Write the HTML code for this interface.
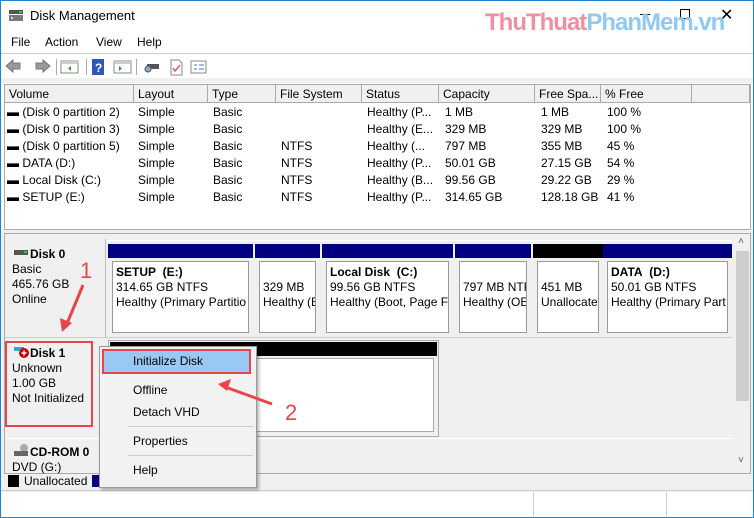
<!DOCTYPE html><html><head><style>
*{margin:0;padding:0;box-sizing:border-box}
body{width:754px;height:518px;overflow:hidden;background:#fff;font-family:"Liberation Sans",sans-serif;font-size:12px;color:#000;position:relative}
.a{position:absolute}
.t{position:absolute;white-space:nowrap}
.hd{position:absolute;top:85px;height:18px;background:#f0f0f0;border-right:1px solid #aaa;border-bottom:1px solid #aaa;padding:2px 0 0 4px}
.part{position:absolute;top:244px;height:93px;background:#f0f0f0}
.part .bar{height:14px;background:#000080}
.part .in{position:absolute;left:4px;right:4px;top:17px;bottom:4px;background:#fff;border:1px solid #999;padding:3px 0 0 3px;line-height:15px;overflow:hidden;white-space:nowrap}
.mi{position:absolute;left:133px}
</style></head><body>
<div class="a" style="left:0;top:0;width:754px;height:518px;border:1px solid #1883d7"></div>
<svg class="a" style="left:8px;top:8px" width="16" height="14"><rect x="1" y="2" width="14" height="4" fill="#555"/><rect x="1" y="7" width="14" height="6" fill="#777"/><rect x="11" y="3" width="3" height="2" fill="#3c3"/><rect x="3" y="9" width="2" height="2" fill="#ddd"/></svg>
<div class="t" style="left:30px;top:8px;font-size:13px">Disk Management</div>
<div class="a" style="left:640px;top:14px;width:10px;height:1px;background:#000"></div>
<div class="a" style="left:680px;top:9px;width:10px;height:10px;border:1px solid #000"></div>
<div class="t" style="left:720px;top:5px;font-size:16px">✕</div>
<div class="t" style="left:485px;top:9px;font-size:24px;font-weight:bold;letter-spacing:-1px;color:#f08aa0;line-height:28px;opacity:.95">ThuThuat<span style="color:#8cc8f0">PhanMem.vn</span></div>
<div class="t" style="left:11px;top:35px">File</div>
<div class="t" style="left:45px;top:35px">Action</div>
<div class="t" style="left:96px;top:35px">View</div>
<div class="t" style="left:137px;top:35px">Help</div>
<div class="a" style="left:1px;top:53px;width:752px;height:1px;background:#ccd"></div>
<svg class="a" style="left:5px;top:58px" width="210" height="18">
<path d="M1 8 L8 2 V5 H15 V11 H8 V14 Z" fill="#999" stroke="#777"/>
<path d="M45 8 L38 2 V5 H31 V11 H38 V14 Z" fill="#999" stroke="#777"/>
<rect x="51" y="1" width="1" height="16" fill="#aaa"/>
<rect x="56" y="3" width="17" height="12" fill="#fff" stroke="#888"/><rect x="56" y="3" width="17" height="3" fill="#ccc"/><path d="M66 8 l-3 2.5 3 2.5z" fill="#2a2"/>
<rect x="81" y="1" width="1" height="16" fill="#aaa"/>
<rect x="87" y="1" width="12" height="16" fill="#2f57b5"/><text x="90" y="14" fill="#fff" font-size="12" font-weight="bold" font-family="Liberation Sans">?</text>
<rect x="109" y="3" width="17" height="12" fill="#fff" stroke="#888"/><rect x="109" y="3" width="17" height="3" fill="#ccc"/><path d="M114 8 l3 2.5 -3 2.5z" fill="#2a2"/>
<rect x="131" y="1" width="1" height="16" fill="#aaa"/>
<rect x="142" y="6" width="12" height="5" fill="#555"/><circle cx="143" cy="11" r="3" fill="#8ad" stroke="#555"/>
<path d="M166 2 h8 l3 3 v12 h-11z" fill="#fff" stroke="#888"/><path d="M168 10 l2 3 5-6" stroke="#e55" stroke-width="1.5" fill="none"/>
<rect x="186" y="3" width="15" height="12" fill="#fff" stroke="#888"/><path d="M189 7 h3 M189 11 h3 M194 7 h5 M194 11 h5" stroke="#47c"/>
</svg>
<div class="a" style="left:1px;top:78px;width:752px;height:5px;background:#f0f0f0"></div>
<div class="a" style="left:4px;top:84px;width:747px;height:146px;border:1px solid #aaa;background:#fff"></div>
<div class="hd" style="left:5px;width:129px">Volume</div>
<div class="hd" style="left:134px;width:74px">Layout</div>
<div class="hd" style="left:208px;width:68px">Type</div>
<div class="hd" style="left:276px;width:86px">File System</div>
<div class="hd" style="left:362px;width:77px">Status</div>
<div class="hd" style="left:439px;width:96px">Capacity</div>
<div class="hd" style="left:535px;width:66px">Free Spa...</div>
<div class="hd" style="left:601px;width:91px">% Free</div>
<div class="hd" style="left:692px;width:58px"></div>
<div class="a" style="left:5px;top:104px;line-height:17px">
<div style="position:relative">
<div class="t" style="left:2px;top:0">▬ (Disk 0 partition 2)<br>▬ (Disk 0 partition 3)<br>▬ (Disk 0 partition 5)<br>▬ DATA (D:)<br>▬ Local Disk (C:)<br>▬ SETUP (E:)</div>
<div class="t" style="left:133px">Simple<br>Simple<br>Simple<br>Simple<br>Simple<br>Simple</div>
<div class="t" style="left:208px">Basic<br>Basic<br>Basic<br>Basic<br>Basic<br>Basic</div>
<div class="t" style="left:276px"><br><br>NTFS<br>NTFS<br>NTFS<br>NTFS</div>
<div class="t" style="left:362px">Healthy (P...<br>Healthy (E...<br>Healthy (...<br>Healthy (P...<br>Healthy (B...<br>Healthy (P...</div>
<div class="t" style="left:440px">1 MB<br>329 MB<br>797 MB<br>50.01 GB<br>99.56 GB<br>314.65 GB</div>
<div class="t" style="left:536px">1 MB<br>329 MB<br>355 MB<br>27.15 GB<br>29.22 GB<br>128.18 GB</div>
<div class="t" style="left:602px">100 %<br>100 %<br>45 %<br>54 %<br>29 %<br>41 %</div>
</div></div>
<div class="a" style="left:1px;top:230px;width:752px;height:262px;background:#f0f0f0"></div>
<div class="a" style="left:4px;top:233px;width:747px;height:241px;border:1px solid #aaa;background:#f0f0f0"></div>
<div class="a" style="left:735px;top:234px;width:15px;height:239px;background:#f0f0f0"></div>
<div class="a" style="left:736px;top:251px;width:13px;height:150px;background:#cdcdcd"></div>
<div class="t" style="left:738px;top:236px;font-size:10px;color:#555">˄</div>
<div class="t" style="left:738px;top:455px;font-size:10px;color:#555">˅</div>
<div class="a" style="left:5px;top:239px;width:101px;height:99px;border-right:1px solid #bbb;border-bottom:1px solid #bbb"></div>
<svg class="a" style="left:14px;top:250px" width="14" height="6"><rect width="14" height="5" fill="#555"/><rect x="10" y="1" width="3" height="2" fill="#3c3"/></svg>
<div class="t" style="left:12px;top:247px;line-height:15px"><b style="margin-left:18px">Disk 0</b><br>Basic<br>465.76 GB<br>Online</div>
<div class="a" style="left:107px;top:240px;width:625px;height:1px;background:#fff"></div>
<div class="part" style="left:108px;width:145px"><div class="bar"></div><div class="in"><b>SETUP&nbsp; (E:)</b><br>314.65 GB NTFS<br>Healthy (Primary Partitio</div></div>
<div class="part" style="left:255px;width:65px"><div class="bar"></div><div class="in"><br>329 MB<br>Healthy (E</div></div>
<div class="part" style="left:322px;width:131px"><div class="bar"></div><div class="in"><b>Local Disk&nbsp; (C:)</b><br>99.56 GB NTFS<br>Healthy (Boot, Page Fi</div></div>
<div class="part" style="left:455px;width:76px"><div class="bar"></div><div class="in"><br>797 MB NTF<br>Healthy (OE</div></div>
<div class="part" style="left:533px;width:70px"><div class="bar" style="background:#000"></div><div class="in"><br>451 MB<br>Unallocate</div></div>
<div class="part" style="left:603px;width:129px"><div class="bar"></div><div class="in"><b>DATA&nbsp; (D:)</b><br>50.01 GB NTFS<br>Healthy (Primary Part</div></div>
<div class="a" style="left:5px;top:337px;width:728px;height:1px;background:#ccc"></div>
<div class="part" style="left:108px;top:340px;width:331px;height:97px;border:1px solid #aaa"><div class="bar" style="background:#000;margin:1px"></div><div class="in" style="top:17px;border-color:#aaa"></div></div>
<div class="a" style="left:5px;top:438px;width:728px;height:1px;background:#fff"></div>
<svg class="a" style="left:14px;top:345px" width="16" height="14"><rect y="2" width="10" height="4" fill="#3ac"/><circle cx="10" cy="8" r="5" fill="#c00"/><path d="M10 5.5v5M7.5 8h5" stroke="#fff" stroke-width="1.5"/></svg>
<div class="t" style="left:12px;top:346px;line-height:15px"><b style="margin-left:18px">Disk 1</b><br>Unknown<br>1.00 GB<br>Not Initialized</div>
<div class="a" style="left:5px;top:341px;width:88px;height:86px;border:2px solid #e8454a"></div>
<svg class="a" style="left:14px;top:443px" width="16" height="14"><circle cx="10" cy="5" r="4" fill="#aaa"/><rect y="8" width="14" height="5" fill="#666"/></svg>
<div class="t" style="left:12px;top:445px;line-height:15px"><b style="margin-left:18px">CD-ROM 0</b><br>DVD (G:)</div>
<div class="a" style="left:8px;top:475px;width:11px;height:12px;background:#000"></div>
<div class="t" style="left:24px;top:474px">Unallocated</div>
<div class="a" style="left:92px;top:475px;width:11px;height:12px;background:#000080"></div>
<div class="t" style="left:108px;top:474px">Primary partition</div>
<div class="a" style="left:1px;top:490px;width:752px;height:1px;background:#ccc"></div>
<div class="a" style="left:533px;top:492px;width:1px;height:24px;background:#ccc"></div>
<div class="a" style="left:666px;top:492px;width:1px;height:24px;background:#ccc"></div>
<div class="a" style="left:99px;top:346px;width:158px;height:142px;background:#f2f2f2;border:1px solid #999;box-shadow:2px 2px 3px rgba(0,0,0,.3)"></div>
<div class="a" style="left:102px;top:349px;width:149px;height:25px;background:#99c9f3;border:2px solid #e8454a"></div>
<div class="mi t" style="top:354px">Initialize Disk</div>
<div class="mi t" style="top:383px">Offline</div>
<div class="mi t" style="top:405px">Detach VHD</div>
<div class="a" style="left:128px;top:426px;width:125px;height:1px;background:#ccc"></div>
<div class="mi t" style="top:434px">Properties</div>
<div class="a" style="left:128px;top:455px;width:125px;height:1px;background:#ccc"></div>
<div class="mi t" style="top:463px">Help</div>
<svg class="a" style="left:0;top:0" width="754" height="518">
<path d="M83 285 L66 326" stroke="#e8454a" stroke-width="3"/><path d="M62 332 l-2 -14 12 5z" fill="#e8454a"/>
<path d="M272 404 L228 388" stroke="#e8454a" stroke-width="3"/><path d="M218 384 l13 -5 -4 12z" fill="#e8454a"/>
<text x="80" y="278" fill="#e8454a" font-size="22" font-family="Liberation Sans">1</text>
<text x="285" y="420" fill="#e8454a" font-size="22" font-family="Liberation Sans">2</text>
</svg>
</body></html>
